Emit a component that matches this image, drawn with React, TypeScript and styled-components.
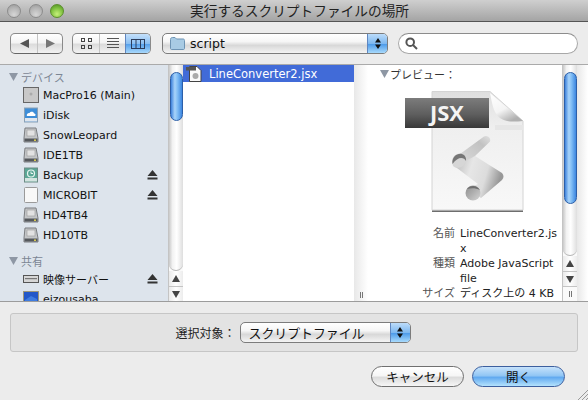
import React from 'react';
import styled, { createGlobalStyle } from 'styled-components';

const Global = createGlobalStyle`
  html, body { margin: 0; padding: 0; background: #ececec; }
  body { font-family: "DejaVu Sans", "Noto Sans CJK JP", sans-serif; color: #111; }
  * { box-sizing: border-box; }
`;

const Window = styled.div`
  width: 588px;
  height: 400px;
  display: flex;
  flex-direction: column;
  overflow: hidden;
  background: #ececec;
`;

const TitleBar = styled.div`
  height: 22px;
  flex: none;
  display: flex;
  align-items: center;
  position: relative;
  padding-left: 7px;
  gap: 7.5px;
  background: linear-gradient(#cfcfcf, #a4a4a4);
  border-bottom: 1px solid #555;
`;

const Light = styled.span<{ $color?: boolean }>`
  width: 14px;
  height: 14px;
  border-radius: 50%;
  border: 1px solid ${p => (p.$color ? '#5c8f2c' : '#8c8c8c')};
  background: ${p =>
    p.$color
      ? 'radial-gradient(circle at 50% 75%, #c6f07a, #7fc140 55%, #4d8a22)'
      : 'radial-gradient(circle at 50% 80%, #d6d6d6, #b4b4b4 60%, #979797)'};
`;

const Title = styled.div`
  position: absolute;
  left: 190px;
  top: 2px;
  font-size: 13.7px;
  line-height: 18px;
  color: #222;
  white-space: nowrap;
`;

const Toolbar = styled.div`
  height: 42px;
  flex: none;
  display: flex;
  align-items: center;
  padding: 1px 10px 0;
  background: #ececec;
`;

const Segments = styled.div<{ $gap: number }>`
  display: flex;
  height: 21px;
  margin-right: ${p => p.$gap}px;
  border: 1px solid #8a8a8a;
  border-bottom-color: #666;
  border-radius: 5px;
  overflow: hidden;
  background: linear-gradient(#fff, #f4f4f4 45%, #dcdcdc 55%, #f2f2f2);
`;

const Segment = styled.div<{ $w: number; $active?: boolean }>`
  width: ${p => p.$w}px;
  display: flex;
  align-items: center;
  justify-content: center;
  border-left: 1px solid #c4c4c4;
  &:first-child { border-left: none; }
  ${p => p.$active && 'background: linear-gradient(#c4e0fb, #8cc0f2 50%, #58a2ec 55%, #a8d8fb); border-left-color: #5f86c0;'}
`;

const PathPopup = styled.div`
  width: 226px;
  height: 21px;
  margin-right: 10px;
  display: flex;
  align-items: center;
  border: 1px solid #7c7c7c;
  border-radius: 5px;
  overflow: hidden;
  padding-left: 7px;
  font-size: 12.5px;
  background: linear-gradient(#fff, #f6f6f6 40%, #d8d8d8 60%, #f4f4f4);
`;

const PopupText = styled.span`
  flex: 1;
  padding-left: 5px;
  white-space: nowrap;
`;

const Stepper = styled.span`
  width: 20px;
  height: 100%;
  flex: none;
  display: flex;
  align-items: center;
  justify-content: center;
  border-left: 1px solid #5f86c0;
  background: linear-gradient(#bcdcfa, #7eb8f0 50%, #4f9cea 55%, #a8dafc);
`;

const Search = styled.div`
  width: 180px;
  height: 21px;
  display: flex;
  align-items: center;
  padding-left: 6px;
  background: #fff;
  border: 1px solid #a8a8a8;
  border-top-color: #8c8c8c;
  border-radius: 11px;
`;

const Browser = styled.div`
  height: 238px;
  flex: none;
  display: flex;
  overflow: hidden;
  border-top: 1px solid #aaa;
  border-bottom: 1px solid #9c9c9c;
  background: #fff;
`;

const Sidebar = styled.div`
  width: 168px;
  flex: none;
  overflow: hidden;
  padding-top: 3px;
  background: #dde4ec;
`;

const Heading = styled.div<{ $top?: number }>`
  height: 17px;
  margin-top: ${p => p.$top ?? 0}px;
  padding-left: 9px;
  display: flex;
  align-items: center;
  gap: 3px;
  font-size: 11px;
  color: #7c8694;
`;

const SideRow = styled.div`
  height: 20px;
  display: flex;
  align-items: center;
  padding: 0 10px 0 23px;
  font-size: 11px;
  color: #111;
  white-space: nowrap;
`;

const SideName = styled.span`
  flex: 1;
  margin-left: 4px;
`;

const Scroller = styled.div`
  width: 15px;
  flex: none;
  display: flex;
  flex-direction: column;
  align-items: center;
  background: #fafafa;
  border-left: 1px solid #c4c4c4;
`;

const Thumb = styled.div<{ $h: number }>`
  width: 13px;
  height: ${p => p.$h}px;
  flex: none;
  margin-top: 7px;
  border: 1px solid #2c5fa8;
  border-radius: 7px;
  background: linear-gradient(90deg, #3f83dc, #a8d4fa 35%, #7fbcf4 60%, #3c86e0);
  position: relative;
  z-index: 1;
`;

/* the groove runs up behind the thumb and ends in a rounded cap above the arrows */
const Track = styled.div`
  flex: 1;
  width: 100%;
  margin-top: -60px;
  border-radius: 0 0 7px 7px;
  border-bottom: 1px solid #b4b4b4;
  background: linear-gradient(90deg, #c9c9c9, #f2f2f2 25%, #fff 55%, #dedede);
`;

const LongTrack = styled(Track)`
  margin-top: -140px;
`;

const ArrowCap = styled.div<{ $divided?: boolean }>`
  width: 100%;
  height: 15px;
  flex: none;
  display: flex;
  align-items: center;
  justify-content: center;
  ${p => p.$divided && 'border-top: 1px solid #c4c4c4;'}
  background: linear-gradient(90deg, #eaeaea, #fff 50%, #ececec);
`;

const Column = styled.div`
  width: 171px;
  flex: none;
  background: #fff;
`;

const FileRow = styled.div`
  height: 17px;
  display: flex;
  align-items: center;
  gap: 6px;
  padding-left: 3px;
  font-size: 11.5px;
  color: #fff;
  background: #416bd8;
`;

const Gutter = styled.div<{ $w: number }>`
  width: ${p => p.$w}px;
  flex: none;
  display: flex;
  flex-direction: column;
  justify-content: flex-end;
  align-items: center;
  padding-bottom: 3px;
  background: linear-gradient(90deg, #e8e8e8, #fff);
`;

const Grip = styled.div`
  width: 3px;
  height: 6px;
  border-left: 1px solid #777;
  border-right: 1px solid #777;
  flex: none;
`;

const GripCell = styled.div`
  width: 100%;
  height: 15px;
  flex: none;
  display: flex;
  align-items: center;
  justify-content: center;
  background: #fafafa;
  border-top: 1px solid #c4c4c4;
`;

const Preview = styled.div`
  width: 194px;
  flex: none;
  overflow: hidden;
  display: flex;
  flex-direction: column;
  background: #fff;
`;

const PreviewHead = styled.div`
  height: 20px;
  display: flex;
  align-items: center;
  gap: 1px;
  padding-left: 12px;
  font-size: 11px;
  color: #333;
`;

const IconWrap = styled.div`
  margin: 7px 0 0 37px;
  height: 125px;
  flex: none;
`;

const Info = styled.div`
  margin-top: 11px;
  display: grid;
  grid-template-columns: 87px 1fr;
  column-gap: 5px;
  font-size: 11px;
  line-height: 15px;
`;

const InfoLabel = styled.div`
  text-align: right;
  color: #555;
  white-space: nowrap;
`;

const InfoValue = styled.div`
  color: #222;
  width: 97px;
  word-break: break-all;
`;

const InfoWrap = styled(InfoValue)`
  word-break: normal;
`;

const Footer = styled.div`
  flex: 1;
  position: relative;
  padding: 11px 10px 0;
  display: flex;
  flex-direction: column;
`;

const FilterBox = styled.div`
  height: 39px;
  display: flex;
  align-items: center;
  justify-content: center;
  gap: 4px;
  padding-right: 2px;
  background: #e3e3e3;
  border: 1px solid #c6c6c6;
  border-radius: 3px;
  font-size: 12px;
  color: #222;
`;

const FilterPopup = styled.div`
  width: 171px;
  height: 21px;
  display: flex;
  align-items: center;
  padding-left: 3px;
  border: 1px solid #7c7c7c;
  border-radius: 5px;
  overflow: hidden;
  font-size: 12.9px;
  color: #111;
  background: linear-gradient(#fff, #f6f6f6 40%, #d8d8d8 60%, #f4f4f4);
`;

const Actions = styled.div`
  display: flex;
  justify-content: flex-end;
  gap: 8px;
  margin-top: 14px;
  padding-right: 13px;
`;

const Button = styled.div<{ $primary?: boolean }>`
  width: 93px;
  height: 21px;
  display: flex;
  align-items: center;
  justify-content: center;
  border-radius: 11px;
  font-size: 12.5px;
  color: #111;
  border: 1px solid ${p => (p.$primary ? '#3c5f9e' : '#707070')};
  background: ${p =>
    p.$primary
      ? 'linear-gradient(#c6e2fb, #92c6f4 45%, #62aaf0 55%, #b4e2fd)'
      : 'linear-gradient(#fff, #f6f6f6 45%, #dcdcdc 55%, #f6f6f6)'};
`;

const ResizeGrip = styled.svg`
  position: absolute;
  right: 0;
  bottom: 0;
`;

const Tri = () => (
  <svg width="9" height="8" viewBox="0 0 9 8">
    <path d="M0 0H9L4.5 8Z" fill="#8e97a4" />
  </svg>
);

const UpDown = () => (
  <svg width="8" height="13" viewBox="0 0 8 13">
    <path d="M4 1L7 5.5H1Z M4 12L1 7.5H7Z" fill="#111" />
  </svg>
);

const Eject = () => (
  <svg width="11" height="10" viewBox="0 0 11 10">
    <path d="M5.5 0L10.5 6H0.5Z M0.5 7.5H10.5V9.5H0.5Z" fill="#333" />
  </svg>
);

const Disk = () => (
  <svg width="16" height="16" viewBox="0 0 16 16">
    <path d="M2 1H13L15 11V15H1V11Z" fill="#c4c6c8" stroke="#7b7d80" />
    <rect x="4" y="3" width="8" height="6" fill="#e2e2e2" stroke="#999" strokeWidth=".6" />
    <rect x="1.5" y="11.5" width="13" height="3" fill="#55585c" />
    <rect x="11" y="12.5" width="2" height="1.4" fill="#e8d850" />
  </svg>
);

const MacIcon = () => (
  <svg width="16" height="16" viewBox="0 0 16 16">
    <rect x=".5" y=".5" width="15" height="15" fill="#c8c8c8" stroke="#666" />
    <circle cx="8" cy="7" r="1.5" fill="#aaa" />
  </svg>
);

const IDiskIcon = () => (
  <svg width="16" height="16" viewBox="0 0 16 16">
    <rect x="1.5" y="1" width="13" height="14" fill="#3e8ed8" stroke="#8aa0b4" />
    <path d="M4 9C3 6.5 6 6 6.5 6C7.5 4 11 4.5 11 6.5C13 6.5 13 9 11.5 9Z" fill="#fff" />
    <rect x="2" y="11" width="12" height="3.5" fill="#dfe6ee" />
  </svg>
);

const BackupIcon = () => (
  <svg width="16" height="16" viewBox="0 0 16 16">
    <rect x="1.5" y="1" width="13" height="14" fill="#5aa695" stroke="#6d8a84" />
    <circle cx="8" cy="6.5" r="3.5" fill="none" stroke="#e8f4f0" strokeWidth="1.2" />
    <path d="M8 4.5V6.5H10" fill="none" stroke="#e8f4f0" />
    <rect x="2" y="11" width="12" height="3.5" fill="#d4e4e0" />
  </svg>
);

const WhiteDiskIcon = () => (
  <svg width="16" height="16" viewBox="0 0 16 16">
    <rect x="1.5" y=".5" width="13" height="15" rx="1" fill="#f8f8f8" stroke="#9a9a9a" />
  </svg>
);

const ServerIcon = () => (
  <svg width="16" height="16" viewBox="0 0 16 16">
    <rect x=".5" y="4.5" width="15" height="7" fill="#d6d6d6" stroke="#555" />
    <rect x="2" y="7" width="12" height="1.2" fill="#777" />
  </svg>
);

const ScreenIcon = () => (
  <svg width="16" height="16" viewBox="0 0 16 16">
    <rect x=".5" y=".5" width="15" height="14" fill="#2458c8" stroke="#a09878" />
    <path d="M2 9L8 5L14 8V13H2Z" fill="#3f7ce0" />
  </svg>
);

const SmallDoc = () => (
  <svg width="17" height="16" viewBox="0 0 17 16">
    <path d="M3.5 .5H11L15 4.5V15.5H3.5Z" fill="#fafafa" stroke="#444" />
    <rect x="0" y="1" width="10" height="3.5" fill="#555" />
    <circle cx="9.5" cy="10" r="3" fill="#aaa" />
  </svg>
);

const FileIcon = () => (
  <svg width="120" height="125" viewBox="0 0 120 125">
    <defs>
      <linearGradient id="page" x1="0" y1="0" x2="0" y2="1">
        <stop offset="0" stopColor="#dedede" />
        <stop offset=".3" stopColor="#efefef" />
        <stop offset="1" stopColor="#f8f8f8" />
      </linearGradient>
      <linearGradient id="fold" x1="0" y1="0" x2=".6" y2="1">
        <stop offset="0" stopColor="#fff" />
        <stop offset=".6" stopColor="#f4f4f4" />
        <stop offset="1" stopColor="#b0b0b0" />
      </linearGradient>
      <linearGradient id="badge" x1="0" y1="0" x2="0" y2="1">
        <stop offset="0" stopColor="#7c7c7c" />
        <stop offset=".55" stopColor="#5e5e5e" />
        <stop offset="1" stopColor="#383838" />
      </linearGradient>
      <linearGradient id="body" x1="0" y1="0" x2="1" y2=".25">
        <stop offset="0" stopColor="#b4b4b4" />
        <stop offset=".4" stopColor="#e6e6e6" />
        <stop offset=".72" stopColor="#dcdcdc" />
        <stop offset="1" stopColor="#989898" />
      </linearGradient>
      <linearGradient id="ribbon" x1="0" y1="1" x2="1" y2="0">
        <stop offset="0" stopColor="#dadada" />
        <stop offset=".7" stopColor="#c2c2c2" />
        <stop offset="1" stopColor="#e0e0e0" />
      </linearGradient>
      <linearGradient id="roll" x1="0" y1="0" x2="1" y2="1">
        <stop offset="0" stopColor="#8c8c8c" />
        <stop offset="1" stopColor="#d4d4d4" />
      </linearGradient>
    </defs>
    <path d="M27 1.5H85L118 31V120H27Z" fill="url(#page)" stroke="#d4d4d4" />
    <path d="M27 120.5H118V122H27Z" fill="#6e6e6e" />
    <path d="M85 3L118 31C108 32 100 32 95 28C88 23 87 12 85 3Z" fill="url(#fold)" />
    <path d="M90 35H118V40H90Z" fill="#e6e6e6" />
    <rect x="0" y="8" width="84" height="30" fill="url(#badge)" />
    <text x="25" y="31" fontFamily="'Open Sans', sans-serif" fontWeight="700" fontSize="21" fill="#f4f4f4" textLength="34" lengthAdjust="spacingAndGlyphs">JSX</text>
    {/* scroll: lower body first, then the ribbon and the two rolled ends */}
    <path d="M48 75C55 72 62 68 70 66L97 83C99 85 99 88 97 90L76 108L62 99L73 94Z" fill="url(#body)" />
    <path d="M55 64L79 46.5C82 44.5 86.5 48 85 51.5L70 66C65 69 60 70 58 73C56 68 55 66 55 64Z" fill="url(#ribbon)" />
    <path d="M48 76C45 68 50 63 56 63.5C60 64 62 68 61 72C59 77 52 80 48 76Z" fill="#d6d6d6" />
    <path d="M47.5 74C46.5 67 52 63 57 64C60 65 61.5 68 61 71C59 67 53 66 47.5 74Z" fill="#767676" />
    <circle cx="68" cy="103" r="7.5" fill="url(#roll)" />
    <path d="M62 99C65 95 72 95 75 100C71 98 66 98 62 99Z" fill="#6e6e6e" />
  </svg>
);

type Place = { name: string; icon: React.ReactNode; eject?: boolean };

const devices: Place[] = [
  { name: 'MacPro16 (Main)', icon: <MacIcon /> },
  { name: 'iDisk', icon: <IDiskIcon /> },
  { name: 'SnowLeopard', icon: <Disk /> },
  { name: 'IDE1TB', icon: <Disk /> },
  { name: 'Backup', icon: <BackupIcon />, eject: true },
  { name: 'MICROBIT', icon: <WhiteDiskIcon />, eject: true },
  { name: 'HD4TB4', icon: <Disk /> },
  { name: 'HD10TB', icon: <Disk /> },
];

const shared: Place[] = [
  { name: '映像サーバー', icon: <ServerIcon />, eject: true },
  { name: 'eizousaba', icon: <ScreenIcon /> },
];

const Row = ({ item }: { item: Place }) => (
  <SideRow>
    {item.icon}
    <SideName>{item.name}</SideName>
    {item.eject && <Eject />}
  </SideRow>
);

const Arrow = ({ down }: { down?: boolean }) => (
  <svg width="8" height="7" viewBox="0 0 8 7">
    <path d={down ? 'M0 0H8L4 7Z' : 'M4 0L8 7H0Z'} fill="#444" />
  </svg>
);

export default function App() {
  return (
    <Window>
      <Global />
      <TitleBar>
        <Light />
        <Light />
        <Light $color />
        <Title>実行するスクリプトファイルの場所</Title>
      </TitleBar>

      <Toolbar>
        <Segments $gap={9}>
          <Segment $w={26}>
            <svg width="9" height="9" viewBox="0 0 9 9"><path d="M0 4.5L9 0V9Z" fill="#555" /></svg>
          </Segment>
          <Segment $w={25}>
            <svg width="9" height="9" viewBox="0 0 9 9"><path d="M9 4.5L0 0V9Z" fill="#777" /></svg>
          </Segment>
        </Segments>
        <Segments $gap={11}>
          <Segment $w={26}>
            <svg width="11" height="11" viewBox="0 0 11 11" fill="none" stroke="#444">
              <rect x=".5" y=".5" width="3" height="3" /><rect x="7.5" y=".5" width="3" height="3" />
              <rect x=".5" y="7.5" width="3" height="3" /><rect x="7.5" y="7.5" width="3" height="3" />
            </svg>
          </Segment>
          <Segment $w={26}>
            <svg width="12" height="11" viewBox="0 0 12 11" stroke="#555">
              <path d="M0 .5H12M0 3.5H12M0 6.5H12M0 9.5H12" />
            </svg>
          </Segment>
          <Segment $w={25} $active>
            <svg width="14" height="10" viewBox="0 0 14 10" fill="none" stroke="#2b3d5c">
              <rect x=".5" y=".5" width="13" height="9" /><path d="M5 .5V9.5M9.5 .5V9.5" />
            </svg>
          </Segment>
        </Segments>
        <PathPopup>
          <svg width="15" height="13" viewBox="0 0 15 13">
            <path d="M.5 2.5C.5 1 1.5 .5 2.5 .5H5L6.5 2H13C14 2 14.5 2.5 14.5 3.5V11.5C14.5 12 14 12.5 13.5 12.5H1.5C1 12.5 .5 12 .5 11.5Z" fill="#a8cbe4" stroke="#6e94b4" />
          </svg>
          <PopupText>script</PopupText>
          <Stepper><UpDown /></Stepper>
        </PathPopup>
        <Search>
          <svg width="13" height="13" viewBox="0 0 13 13" fill="none" stroke="#555" strokeWidth="2">
            <circle cx="5.2" cy="5.2" r="3.8" /><path d="M8 8L12 12" />
          </svg>
        </Search>
      </Toolbar>

      <Browser>
        <Sidebar>
          <Heading><Tri />デバイス</Heading>
          {devices.map(d => <Row key={d.name} item={d} />)}
          <Heading $top={7}><Tri />共有</Heading>
          {shared.map(d => <Row key={d.name} item={d} />)}
        </Sidebar>
        <Scroller>
          <Thumb $h={49} />
          <Track />
          <ArrowCap><Arrow /></ArrowCap>
          <ArrowCap $divided><Arrow down /></ArrowCap>
        </Scroller>
        <Column>
          <FileRow><SmallDoc />LineConverter2.jsx</FileRow>
        </Column>
        <Gutter $w={14}><Grip /></Gutter>
        <Preview>
          <PreviewHead><Tri />プレビュー：</PreviewHead>
          <IconWrap><FileIcon /></IconWrap>
          <Info>
            <InfoLabel>名前</InfoLabel>
            <InfoValue>LineConverter2.jsx</InfoValue>
            <InfoLabel>種類</InfoLabel>
            <InfoWrap>Adobe JavaScript file</InfoWrap>
            <InfoLabel>サイズ</InfoLabel>
            <InfoWrap>ディスク上の 4 KB</InfoWrap>
          </Info>
        </Preview>
        <Scroller>
          <Thumb $h={132} />
          <LongTrack />
          <ArrowCap><Arrow /></ArrowCap>
          <ArrowCap $divided><Arrow down /></ArrowCap>
          <GripCell><Grip /></GripCell>
        </Scroller>
        <Gutter $w={11} />
      </Browser>

      <Footer>
        <FilterBox>
          選択対象：
          <FilterPopup>
            <PopupText>スクリプトファイル</PopupText>
            <Stepper><UpDown /></Stepper>
          </FilterPopup>
        </FilterBox>
        <Actions>
          <Button>キャンセル</Button>
          <Button $primary>開く</Button>
        </Actions>
        <ResizeGrip width="11" height="11" viewBox="0 0 11 11" stroke="#9a9a9a">
          <path d="M11 1L1 11M11 5L5 11M11 9L9 11" />
        </ResizeGrip>
      </Footer>
    </Window>
  );
}
